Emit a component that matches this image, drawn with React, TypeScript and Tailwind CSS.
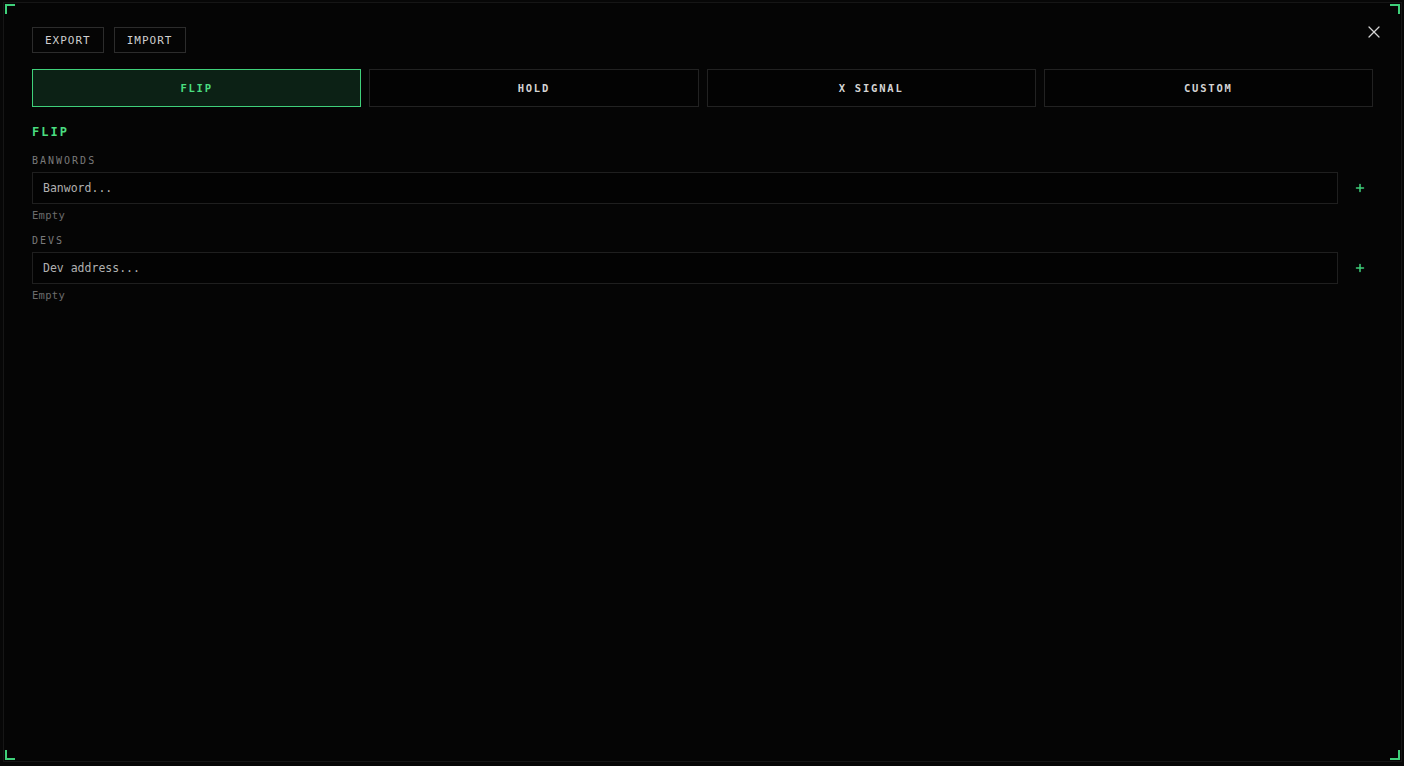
import { X, Plus } from "lucide-react";

const mono = { fontFamily: '"DejaVu Sans Mono", "Liberation Mono", monospace' };

const tabs = ["FLIP", "HOLD", "X SIGNAL", "CUSTOM"];

const Corner = ({ className }: { className: string }) => (
  <span className={`absolute w-[10px] h-[10px] border-[#3fd07a] ${className}`} />
);

type ListFieldProps = {
  label: string;
  placeholder: string;
};

const ListField = ({ label, placeholder }: ListFieldProps) => (
  <div className="flex flex-col">
    <div className="text-[10px] leading-[12px] tracking-[2px] text-[#7a7a7a]">{label}</div>
    <div className="mt-[5px] flex items-center gap-2">
      <div className="flex-1 h-[32px] border border-[#1f1f1f] bg-[#030303] flex items-center px-[10px] pt-[2px] text-[11.5px] text-[#b0b0b0]">
        {placeholder}
      </div>
      <button className="w-[27px] h-[32px] flex items-center justify-center text-[#3fd07a]">
        <Plus size={12} strokeWidth={3} />
      </button>
    </div>
    <div className="mt-[5px] text-[10.5px] leading-[12px] tracking-[0.3px] text-[#6c6c6c]">Empty</div>
  </div>
);

export default function App() {
  return (
    <div className="w-[1404px] h-[766px] bg-[#070707] p-[2px_2px_4px_3px] overflow-hidden" style={mono}>
      <div className="relative h-full border border-[#161616] bg-[#050505] px-[28px] pt-[24px]">
        <Corner className="top-[1px] left-[1px] border-t-2 border-l-2" />
        <Corner className="top-[1px] right-[1px] border-t-2 border-r-2" />
        <Corner className="bottom-[1px] left-[1px] border-b-2 border-l-2" />
        <Corner className="bottom-[1px] right-[1px] border-b-2 border-r-2" />

        <button className="absolute top-[19px] right-[17px] text-[#d4d4d4]">
          <X size={20} strokeWidth={1.5} />
        </button>

        <div className="flex gap-[10px]">
          {["EXPORT", "IMPORT"].map((b) => (
            <button
              key={b}
              className="h-[26px] px-[12px] pt-[2px] border border-[#2c2c2c] text-[11px] tracking-[1px] text-[#cfcfcf]"
            >
              {b}
            </button>
          ))}
        </div>

        <div className="mt-[16px] grid grid-cols-4 gap-[8px]">
          {tabs.map((t, i) => (
            <div
              key={t}
              className={
                i === 0
                  ? "h-[38px] pt-[2px] flex items-center justify-center border border-[#3fd07a] bg-[#0c2115] text-[10.5px] font-bold tracking-[1.8px] text-[#4ade80]"
                  : "h-[38px] pt-[2px] flex items-center justify-center border border-[#222] bg-[#030303] text-[10.5px] font-bold tracking-[1.8px] text-[#d4d4d4]"
              }
            >
              {t}
            </div>
          ))}
        </div>

        <div className="mt-[18px] text-[12px] leading-[14px] font-bold tracking-[2px] text-[#4ade80]">FLIP</div>

        <div className="mt-[16px] flex flex-col gap-[14px]">
          <ListField label="BANWORDS" placeholder="Banword..." />
          <ListField label="DEVS" placeholder="Dev address..." />
        </div>
      </div>
    </div>
  );
}
